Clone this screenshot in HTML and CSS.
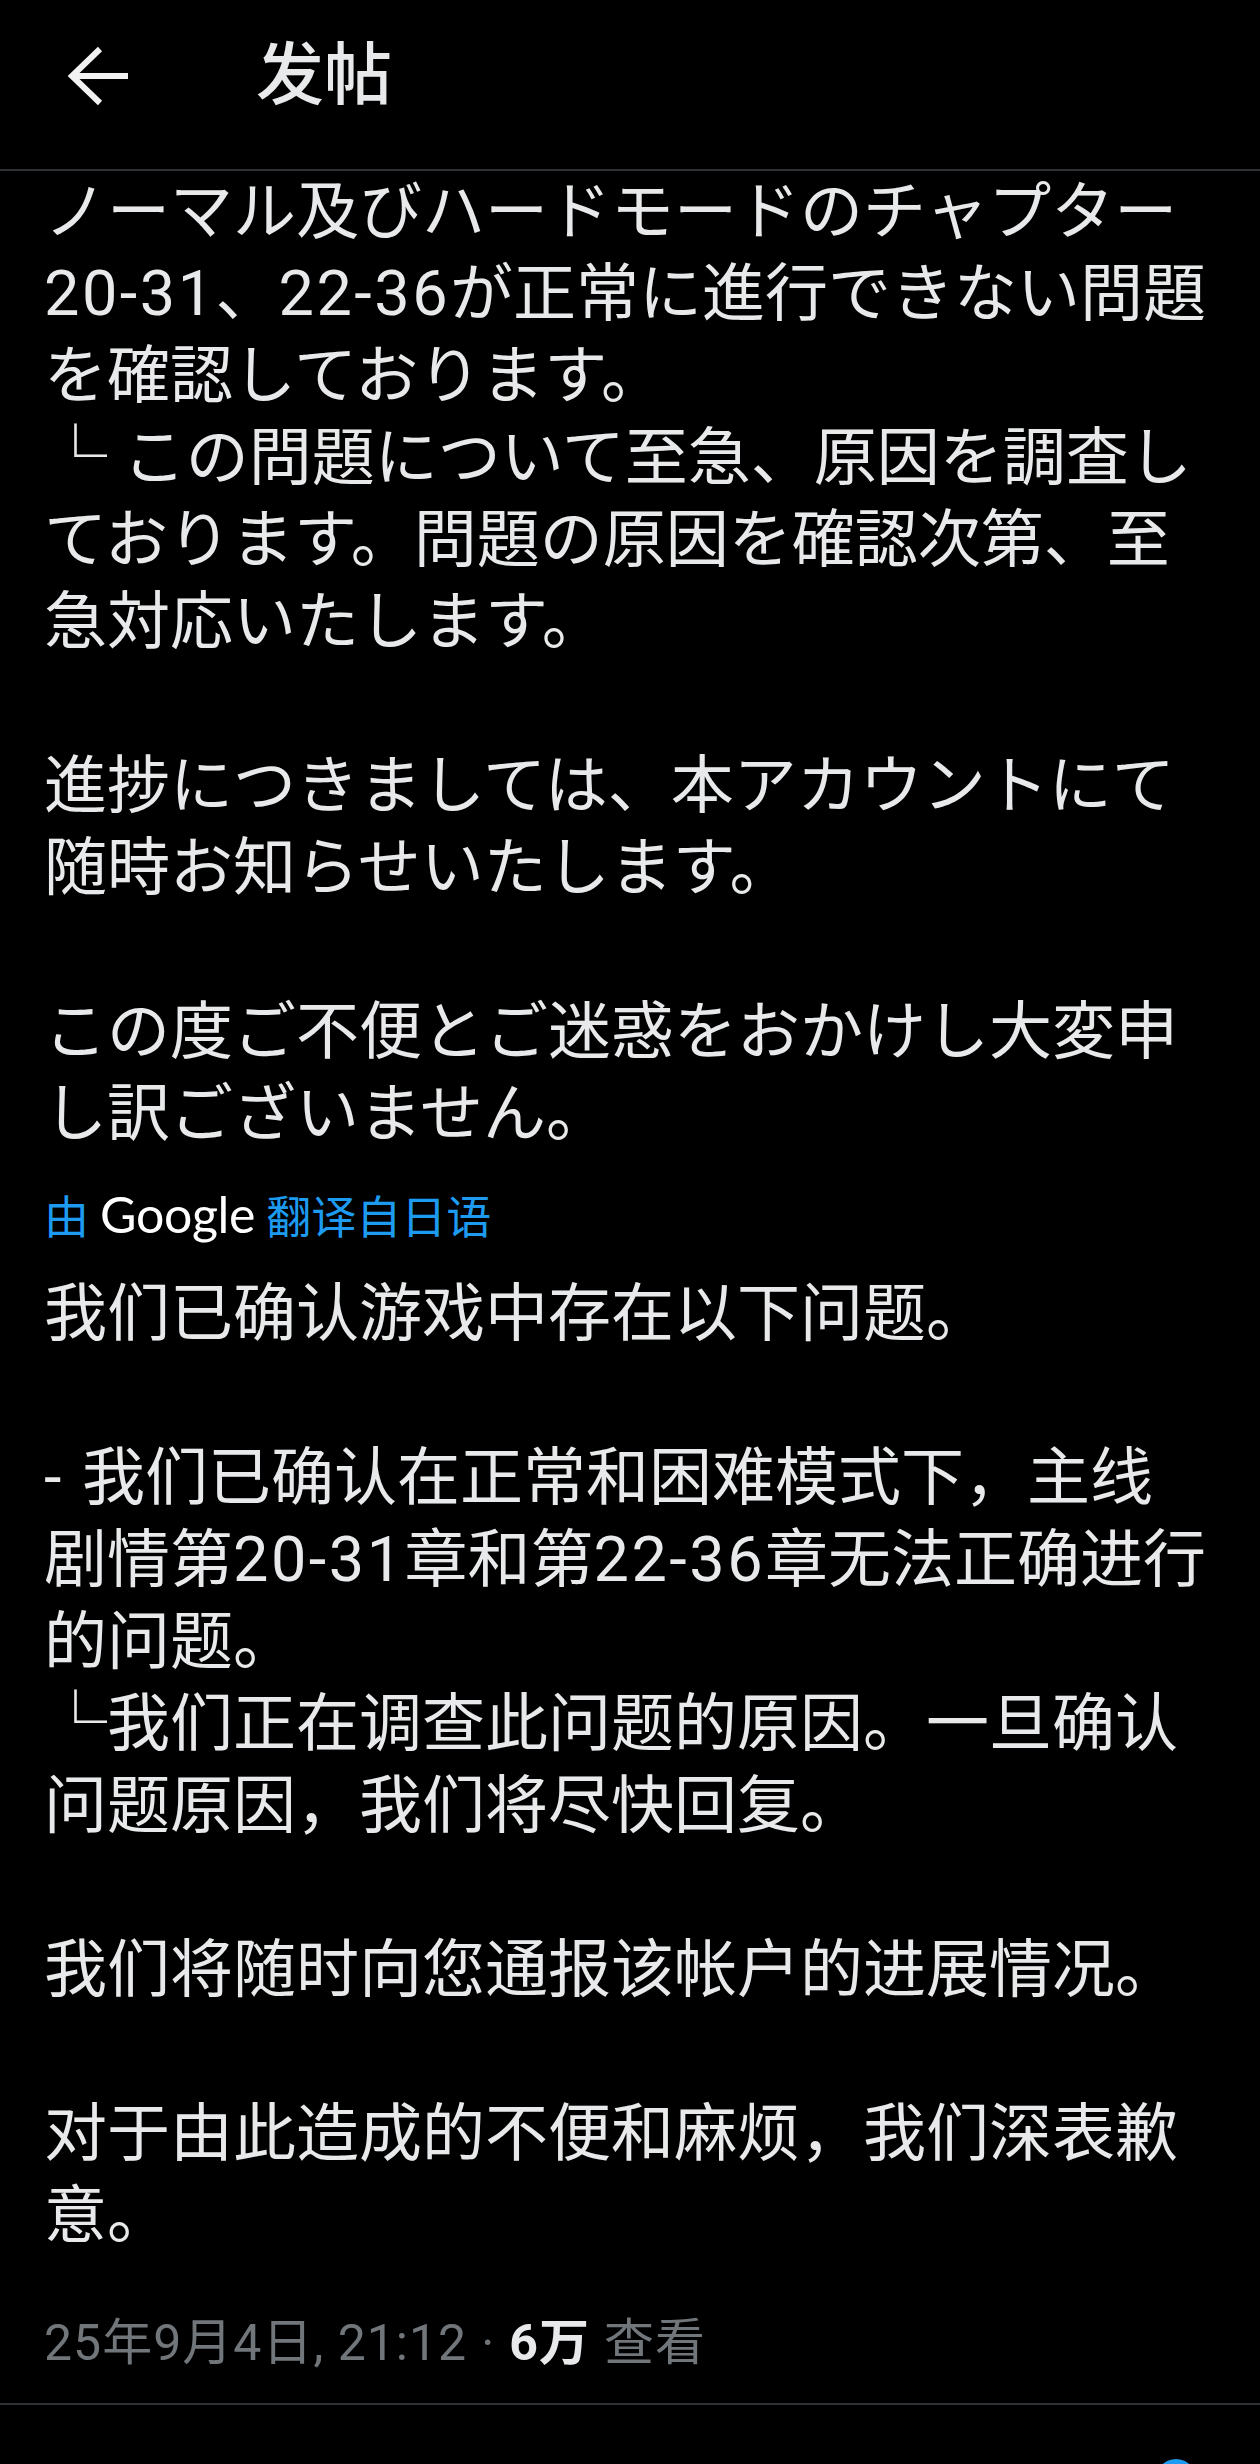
FILE: index.html
```html
<!DOCTYPE html>
<html lang="zh-CN">
<head>
    <meta charset="UTF-8">
    <meta name="viewport" content="width=device-width, initial-scale=1.0">
    <title>发帖</title>
    <link rel="stylesheet" href="styles.css">
</head>
<body>
    <header class="topbar">
        <svg class="back-icon" viewBox="0 0 64 60" width="64" height="60" aria-hidden="true">
            <path d="M62 30H6" />
            <path d="M34 3L6 30L34 57" />
        </svg>
        <h1 class="title">发帖</h1>
    </header>

    <main class="post">
        <div class="post-text" lang="ja">
            <p>ノーマル及びハードモードのチャプター<br><span class="num">20-31</span>、<span class="num">22-36</span>が正常に進行できない問題<br>を確認しております。<br>└ この問題について至急、原因を調査し<br>ております。問題の原因を確認次第、至<br>急対応いたします。</p>
            <p>進捗につきましては、本アカウントにて<br>随時お知らせいたします。</p>
            <p>この度ご不便とご迷惑をおかけし大変申<br>し訳ございません。</p>
        </div>

        <div class="translated">
            <span class="by">由</span>
            <span class="google">Google</span>
            <span class="by">翻译自日语</span>
        </div>

        <div class="post-text" lang="zh-CN">
            <p>我们已确认游戏中存在以下问题。</p>
            <p><span class="num">- </span>我们已确认在正常和困难模式下，主线<br>剧情第<span class="num">20-31</span>章和第<span class="num">22-36</span>章无法正确进行<br>的问题。<br>└我们正在调查此问题的原因。一旦确认<br>问题原因，我们将尽快回复。</p>
            <p>我们将随时向您通报该帐户的进展情况。</p>
            <p>对于由此造成的不便和麻烦，我们深表歉<br>意。</p>
        </div>

        <div class="meta">
            <span class="time">25年9月4日, 21:12</span>
            <span class="dot">·</span>
            <span class="views">6万</span>
            <span class="time">查看</span>
        </div>
    </main>

    <div class="fab-peek"></div>
</body>
</html>
```

FILE: styles.css
```css
body {
    margin: 0;
    height: 2464px;
    overflow: hidden;
    background-color: #000;
    color: #e7e9ea;
    font-family: Roboto, "Noto Sans CJK SC", sans-serif;
    position: relative;
}

.topbar {
    display: flex;
    align-items: center;
    box-sizing: border-box;
    height: 171px;
    padding: 0 0 18px 66px;
    border-bottom: 2px solid #2f3336;
}
.back-icon {
    flex: none;
}
.back-icon path {
    fill: none;
    stroke: #f2f2f2;
    stroke-width: 6;
}
.title {
    margin: 0 0 0 126px;
    font-size: 68px;
    line-height: 1;
    font-weight: 500;
    color: #e7e9ea;
}

.post {
    padding: 0 44px;
}
.post-text {
    font-size: 63px;
    line-height: 82px;
}
.post-text[lang="ja"] {
    font-family: Roboto, "Noto Sans CJK JP", sans-serif;
}
.post-text p {
    margin: 0 0 82px 0;
}
.post-text p:last-child {
    margin-bottom: 0;
}
.num {
    letter-spacing: 2.5px;
}

.translated {
    display: flex;
    align-items: center;
    gap: 11px;
    padding: 30px 0;
    height: 58px;
    font-size: 45px;
}
.translated .by {
    color: #1d9bf0;
}
.translated .google {
    font-family: Lato, sans-serif;
    font-size: 50px;
    color: #fff;
    letter-spacing: -0.3px;
}

.meta {
    display: flex;
    align-items: center;
    gap: 14px;
    padding: 60px 0 34px 44px;
    margin: 0 -44px;
    line-height: 52px;
    font-size: 50px;
    letter-spacing: 1px;
    color: #71767b;
    border-bottom: 2px solid #2f3336;
}
.meta .views {
    color: #e7e9ea;
    font-weight: bold;
}

.fab-peek {
    position: absolute;
    left: 1156px;
    top: 2459px;
    width: 40px;
    height: 40px;
    border-radius: 50%;
    background-color: #1d9bf0;
}
```
